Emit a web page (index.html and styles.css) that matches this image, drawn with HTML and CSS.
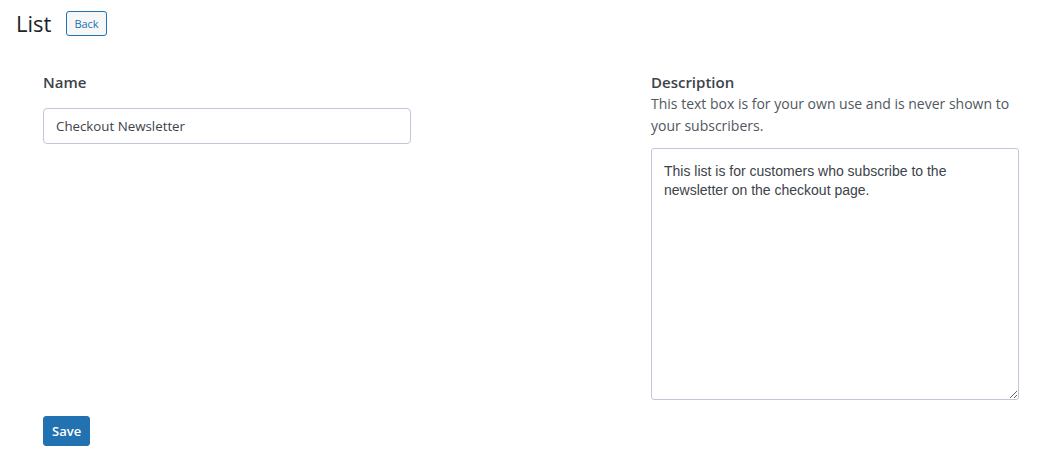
FILE: index.html
```html
<!DOCTYPE html>
<html lang="en">
<head>
<meta charset="utf-8">
<title>List</title>
<link rel="stylesheet" href="styles.css">
</head>
<body>
<header class="page-head">
  <h1 class="page-title">List</h1>
  <button class="btn-back" type="button">Back</button>
</header>
<form class="list-form">
  <div class="fields">
    <div class="field">
      <label class="field-label" for="list-name">Name</label>
      <input class="text-input" id="list-name" type="text" value="Checkout Newsletter">
    </div>
    <div class="field">
      <label class="field-label" for="list-desc">Description</label>
      <p class="field-help">This text box is for your own use and is never shown to your subscribers.</p>
      <textarea class="text-area" id="list-desc">This list is for customers who subscribe to the newsletter on the checkout page.</textarea>
    </div>
  </div>
  <button class="btn-save" type="button">Save</button>
</form>
</body>
</html>
```

FILE: styles.css
```css
* { box-sizing: border-box; }

body {
  margin: 0;
  background: #fff;
  color: #3c434a;
  font-family: "Open Sans", "Noto Sans", sans-serif;
}

.page-head {
  display: flex;
  align-items: center;
  gap: 15px;
  padding: 9px 0 0 16px;
}

.page-title {
  margin: 0;
  font-size: 22px;
  font-weight: 400;
  color: #1d2327;
  line-height: 28px;
}

.btn-back {
  height: 25px;
  padding: 0 7px;
  border: 1px solid #2271b1;
  border-radius: 3px;
  background: #f6f7f7;
  color: #2271b1;
  font-family: inherit;
  font-size: 11px;
  line-height: 23px;
}

.list-form {
  padding: 35px 0 0 43px;
}

.fields {
  display: grid;
  grid-template-columns: 608px 368px;
}

.field {
  display: flex;
  flex-direction: column;
  align-items: flex-start;
}

.field-label {
  font-size: 15px;
  font-weight: 600;
  color: #3c434a;
  line-height: 20px;
}

.field-help {
  margin: 1px 0 0;
  width: 368px;
  font-size: 14px;
  line-height: 22px;
  color: #50575e;
}

.text-input {
  margin-top: 16px;
  width: 368px;
  height: 36px;
  padding: 0 12px;
  border: 1px solid #c5c6dc;
  border-radius: 4px;
  font-family: inherit;
  font-size: 13.3px;
  color: #3c434a;
}

.text-area {
  margin-top: 11px;
  width: 368px;
  height: 252px;
  padding: 13px 12px;
  border: 1px solid #c5c6dc;
  border-radius: 3px;
  font-family: "Liberation Sans", Arial, sans-serif;
  font-size: 14px;
  line-height: 19px;
  color: #3c434a;
}

.btn-save {
  margin-top: 16px;
  height: 30px;
  padding: 0 8px;
  border: 1px solid #2271b1;
  border-radius: 3px;
  background: #2271b1;
  color: #fff;
  font-family: inherit;
  font-size: 13px;
  font-weight: 600;
}
```
